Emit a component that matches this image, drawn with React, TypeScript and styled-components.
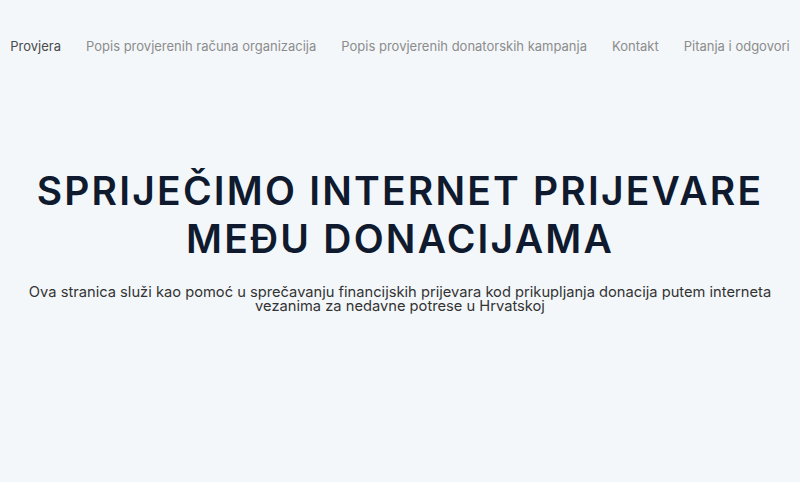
import styled, { createGlobalStyle } from "styled-components";

const GlobalStyle = createGlobalStyle`
  html, body {
    margin: 0;
    padding: 0;
    background: #f3f7fa;
  }
  body {
    font-family: Inter, "Open Sans", sans-serif;
  }
`;

const navItems = [
  "Provjera",
  "Popis provjerenih računa organizacija",
  "Popis provjerenih donatorskih kampanja",
  "Kontakt",
  "Pitanja i odgovori",
];

export default function App() {
  return (
    <>
      <GlobalStyle />
      <Page>
        <Nav>
          {navItems.map((item, i) => (
            <NavLink key={item} $active={i === 0}>
              {item}
            </NavLink>
          ))}
        </Nav>
        <Hero>
          <Title>
            SPRIJEČIMO INTERNET PRIJEVARE
            <br />
            MEĐU DONACIJAMA
          </Title>
          <Lead>
            Ova stranica služi kao pomoć u sprečavanju financijskih prijevara
            kod prikupljanja donacija putem interneta
            <br />
            vezanima za nedavne potrese u Hrvatskoj
          </Lead>
        </Hero>
      </Page>
    </>
  );
}

const Page = styled.div`
  width: 800px;
  height: 482px;
  background: #f3f7fa;
  overflow: hidden;
`;

const Nav = styled.nav`
  display: flex;
  justify-content: center;
  gap: 25px;
  padding-top: 36px;
  height: 20px;
`;

const NavLink = styled.a<{ $active: boolean }>`
  font-size: 13px;
  line-height: 20px;
  white-space: nowrap;
  color: ${(p) => (p.$active ? "#4a4a4a" : "#8c8c8c")};
  cursor: pointer;
`;

const Hero = styled.section`
  display: flex;
  flex-direction: column;
  align-items: center;
  padding-top: 111px;
`;

const Title = styled.h1`
  margin: 0;
  font-size: 39px;
  font-weight: 600;
  letter-spacing: 2.2px;
  line-height: 48px;
  text-align: center;
  white-space: nowrap;
  color: #0f1a2e;
`;

const Lead = styled.p`
  margin: 22px 0 0;
  font-size: 14.7px;
  line-height: 14px;
  text-align: center;
  white-space: nowrap;
  color: #333;
`;
